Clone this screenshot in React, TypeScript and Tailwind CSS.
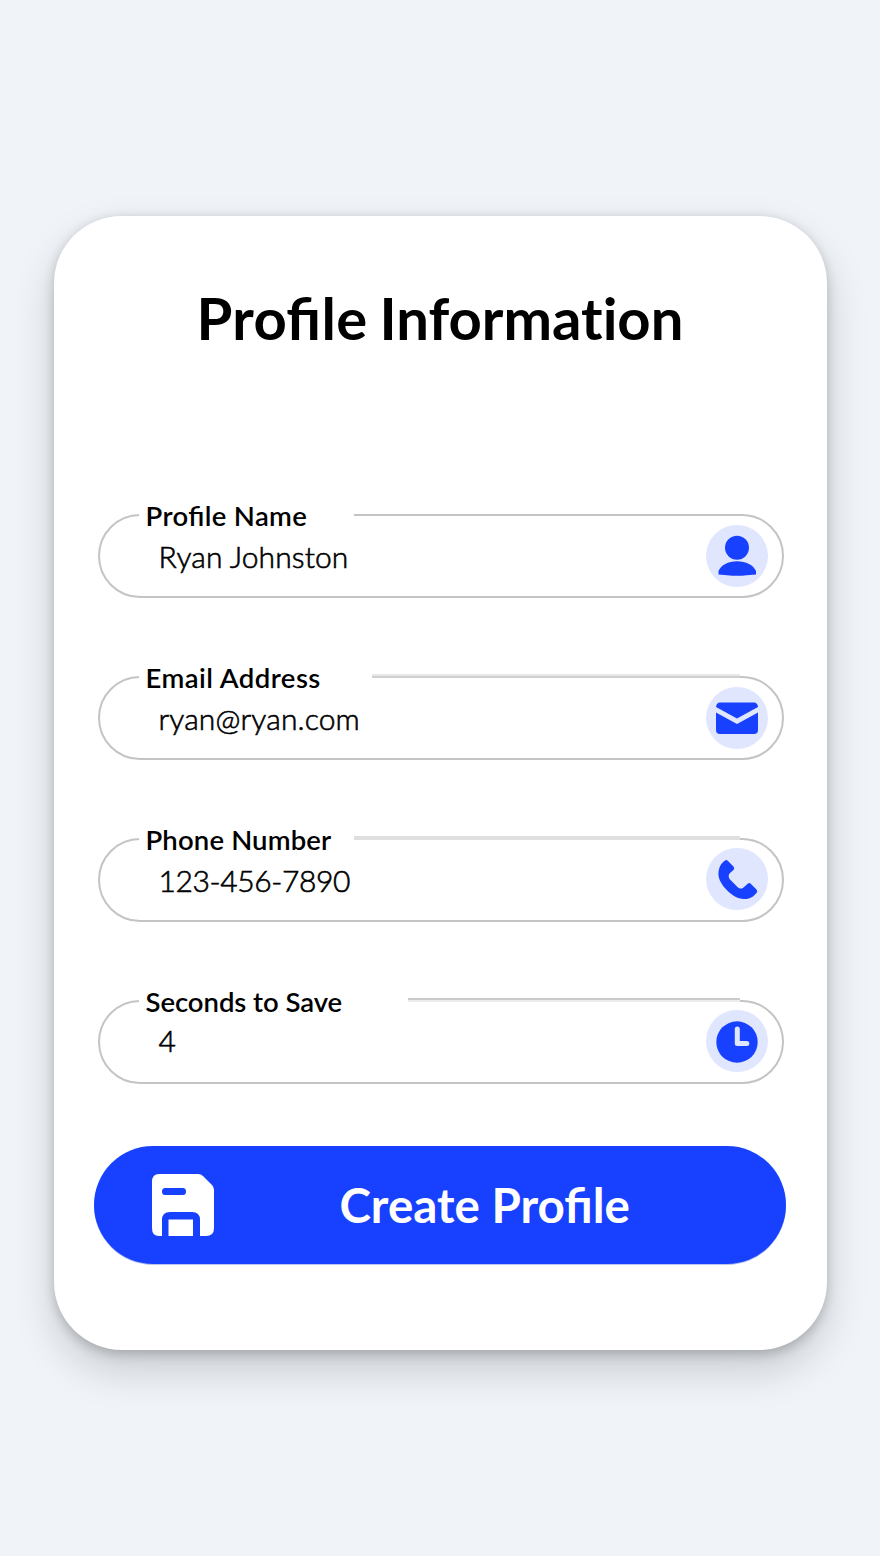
import React from "react";

function Badge({ shift = "", children }: { shift?: string; children: React.ReactNode }) {
  return (
    <svg className={`${shift} h-[62px] w-[62px] shrink-0`} viewBox="0 0 62 62" fill="#1841ff">
      <circle cx="31" cy="31" r="31" fill="#e1e6ff" />
      {children}
    </svg>
  );
}

const PersonIcon = () => (
  <Badge>
    <circle cx="31" cy="22.800" r="12" />
    <path d="M12.500 46C15 40 22 36.200 31 36.200S47.500 40 50 46V49.500L41 50.200Q31 51.200 21 50.200L12.500 49.500Z" />
  </Badge>
);

const MailIcon = () => (
  <Badge>
    <path d="M14 15.5h34q3.5 0 4 4.5L31 31.500 10 20q.5-4.500 4-4.500Z" />
    <path d="M10 25.500 31 37l21-11.500V43q0 4-4 4H14q-4 0-4-4Z" />
  </Badge>
);

const PhoneIcon = () => (
  <Badge shift="-mt-[2px]">
    <path d="M19 12.500Q20.500 11.500 22 13L27.500 18.500Q29 20.500 27.500 22L24 25C22 27 22.500 29.500 24 31.500L32 39.500C34 41 36 41 37.500 39.500L42 35.500Q43.500 34.500 45 36L50.500 41.500Q52 43.500 50.500 45L47 48.500C42 52 34 52 28 48C20.500 43 15 36.500 13 30C11.500 24 13 16.500 19 12.500Z" />
  </Badge>
);

const ClockIcon = () => (
  <Badge shift="-mt-[2px]">
    <circle cx="31" cy="32" r="20.700" />
    <path d="M31.300 19v14.500h9.500" fill="none" stroke="#e1e6ff" strokeWidth="5" strokeLinecap="round" strokeLinejoin="round" />
  </Badge>
);

type FieldProps = {
  label: string;
  value: string;
  notch: string;
  tracking: string;
  line: string;
  input: string;
  icon: React.ReactNode;
};

function Field({ label, value, notch, tracking, line, input, icon }: FieldProps) {
  return (
    <div className="relative flex h-[84px] items-center justify-between rounded-full border-2 border-[#c4c4c4] pr-[14px] pl-[59px]">
      <span className={`${line} absolute right-[42px] left-[39px] h-[4px]`} />
      <label
        className={`${notch} ${tracking} absolute -top-[17px] left-[39px] h-[34px] bg-white pl-[7px] text-[27.5px] leading-[34px] font-semibold whitespace-nowrap [font-feature-settings:'liga']`}
      >
        {label}
      </label>
      <span className={`${input} relative text-[30px] leading-[36px] font-light [-webkit-text-stroke:0.6px_black]`}>{value}</span>
      {icon}
    </div>
  );
}

export default function App() {
  return (
    <main className="flex h-[1556px] w-[880px] justify-center bg-[#f0f4f9] pt-[215px] font-['Lato',sans-serif] text-black">
      <section className="flex h-[1135px] w-[773px] flex-col rounded-[68px] border-t border-[#dcdfe2] bg-white px-[40px] shadow-[0_20px_40px_0_rgba(0,0,0,0.17),0_4px_12px_0_rgba(0,0,0,0.2)]">
        <h1 className="mt-[67px] text-center text-[58px] leading-[70px] font-bold whitespace-nowrap">
          <span className="mr-[-2px] tracking-[0.3px] [font-feature-settings:'liga']">Profile</span>{" "}
          <span className="[font-variant-ligatures:none]">Information</span>
        </h1>
        <form className="flex flex-1 flex-col">
          <div className="mt-[161px] flex flex-col gap-[78px] pr-[3px] pl-[4px]">
            <Field label="Profile Name" value="Ryan Johnston" notch="w-[215px]" tracking="tracking-[0.35px]" line="hidden" input="top-0 tracking-[0.1px]" icon={<PersonIcon />} />
            <Field label="Email Address" value="ryan@ryan.com" notch="w-[233px]" tracking="tracking-[0.45px]" line="-top-[4px] border-t-2 border-[#e8e8e8] bg-[#d0d0d0]" input="top-0 tracking-[0.15px]" icon={<MailIcon />} />
            <Field label="Phone Number" value="123-456-7890" notch="w-[215px]" tracking="tracking-[0.15px]" line="-top-[4px] bg-[#dfdfdf]" input="top-0 tracking-[-0.4px]" icon={<PhoneIcon />} />
            <Field label="Seconds to Save" value="4" notch="w-[269px]" tracking="tracking-[-0.05px]" line="-top-[4px] border-b-2 border-[#ededed] bg-[#cacaca]" input="-top-[2px]" icon={<ClockIcon />} />
          </div>
          <button type="button" className="mt-[62px] flex h-[118px] w-[692px] items-center rounded-full bg-[#1841ff] pl-[58px] text-white shadow-[0_1px_0_#b9c4ee]">
            <svg className="h-[62px] w-[62px]" viewBox="0 0 62 62" fill="white">
              <path fillRule="evenodd" d="M7 0H46Q49 0 51 2L60 11Q62 13 62 16V54Q62 62 54 62H48V46Q48 38 40 38H18Q10 38 10 46V62H7Q0 62 0 54V8Q0 0 7 0ZM13 14Q10 14 10 17.500T13 21H31Q34 21 34 17.500T31 14Z" />
              <path d="M16.500 62V45.500H41V62Z" />
            </svg>
            <span className="ml-[126px] text-[47.5px] leading-[56px] font-bold whitespace-nowrap">Create Profile</span>
          </button>
        </form>
      </section>
    </main>
  );
}
